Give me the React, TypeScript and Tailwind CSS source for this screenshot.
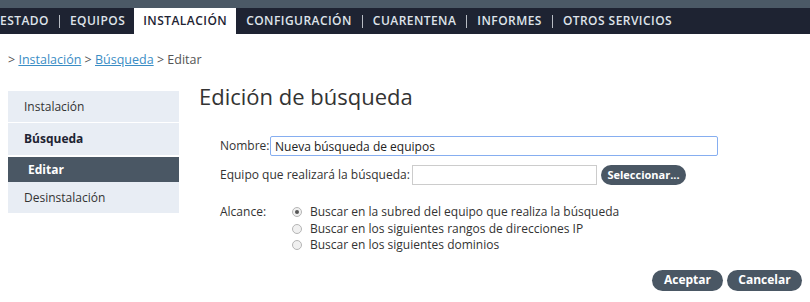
import React from "react";

const F = { fontFamily: '"Open Sans", "Liberation Sans", sans-serif' };

function Sep() {
  return <span className="mx-[10px] inline-block h-[13px] w-px bg-[#b8bcc4]" />;
}

export default function App() {
  const navItems = ["ESTADO", "EQUIPOS", "INSTALACIÓN", "CONFIGURACIÓN", "CUARENTENA", "INFORMES", "OTROS SERVICIOS"];
  return (
    <div className="w-[810px] h-[302px] bg-white text-[#333] overflow-hidden" style={F}>
      <div className="h-2 bg-[#4b5966]" />
      <div className="h-[26px] bg-[#1e2332] flex items-stretch">
        {navItems.map((n, i) => {
          const active = n === "INSTALACIÓN";
          const nextActive = navItems[i + 1] === "INSTALACIÓN";
          return (
            <React.Fragment key={n}>
              <div
                className={
                  "flex items-center text-[12px] font-semibold tracking-[0.45px] " +
                  (active ? "bg-white text-[#1e2332] px-[9px]" : "text-[#dfe3ea]")
                }
              >
                {n}
              </div>
              {i < navItems.length - 1 && !active && !nextActive && (
                <div className="flex items-center"><Sep /></div>
              )}
              {nextActive && <div className="w-[9px]" />}
              {active && <div className="w-[10px]" />}
            </React.Fragment>
          );
        })}
      </div>
      <div className="pl-2 pt-[17px] text-[12.5px] text-[#555] h-[31px]">
        &gt; <span className="text-[#3a8dc5] underline">Instalación</span> &gt;{" "}
        <span className="text-[#3a8dc5] underline">Búsqueda</span> &gt; Editar
      </div>
      <div className="flex pt-[26px]">
        <div className="ml-2 w-[171px] flex flex-col text-[12px]">
          <div className="h-[31px] bg-[#e8edf4] flex items-center pl-4 text-[#333]">Instalación</div>
          <div className="h-px" />
          <div className="h-[32px] bg-[#e8edf4] flex items-center pl-4 font-bold text-[#1e2332]">Búsqueda</div>
          <div className="h-[2px]" />
          <div className="h-[25px] bg-[#4a5764] flex items-center pl-[20px] font-bold text-white">Editar</div>
          <div className="h-[31px] bg-[#e8edf4] flex items-center pl-4 text-[#333]">Desinstalación</div>
        </div>
        <div className="ml-5 flex-1 -mt-[10px]">
          <div className="text-[22px] leading-[30px] text-[#333]">Edición de búsqueda</div>
          <div className="pl-[21px] pt-[25px] text-[12px]">
            <div className="flex items-center h-[20px]">
              <span className="w-[50px]">Nombre:</span>
              <input
                readOnly
                value="Nueva búsqueda de equipos"
                className="w-[448px] h-[20px] border border-[#86aef0] rounded-[2px] px-[4px] text-[12px] outline-none text-[#222]"
                style={F}
              />
            </div>
            <div className="flex items-center h-[20px] mt-[9px]">
              <span className="w-[192px]">Equipo que realizará la búsqueda:</span>
              <input readOnly className="w-[185px] h-[20px] border border-[#ccc] outline-none" />
              <button className="ml-1 w-[85px] h-[20px] rounded-full bg-[#4a5764] text-white font-bold text-[11px]" style={F}>
                Seleccionar...
              </button>
            </div>
            <div className="flex mt-[19px]">
              <span className="w-[72px] leading-[16.5px]">Alcance:</span>
              <div className="flex flex-col">
                {[
                  "Buscar en la subred del equipo que realiza la búsqueda",
                  "Buscar en los siguientes rangos de direcciones IP",
                  "Buscar en los siguientes dominios",
                ].map((t, i) => (
                  <div key={t} className="flex items-center h-[16.5px]">
                    <span className="w-[10px] h-[10px] rounded-full border border-[#b5b5b5] bg-[#f0f0f0] flex items-center justify-center mr-[8px]">
                      {i === 0 && <span className="w-[4px] h-[4px] rounded-full bg-[#555]" />}
                    </span>
                    <span>{t}</span>
                  </div>
                ))}
              </div>
            </div>
          </div>
        </div>
      </div>
      <div className="flex justify-end pr-2 gap-1 mt-[16px]">
        <button className="w-[71px] h-[21px] rounded-full bg-[#4a5764] text-white font-bold text-[12px]" style={F}>Aceptar</button>
        <button className="w-[75px] h-[21px] rounded-full bg-[#4a5764] text-white font-bold text-[12px]" style={F}>Cancelar</button>
      </div>
    </div>
  );
}
